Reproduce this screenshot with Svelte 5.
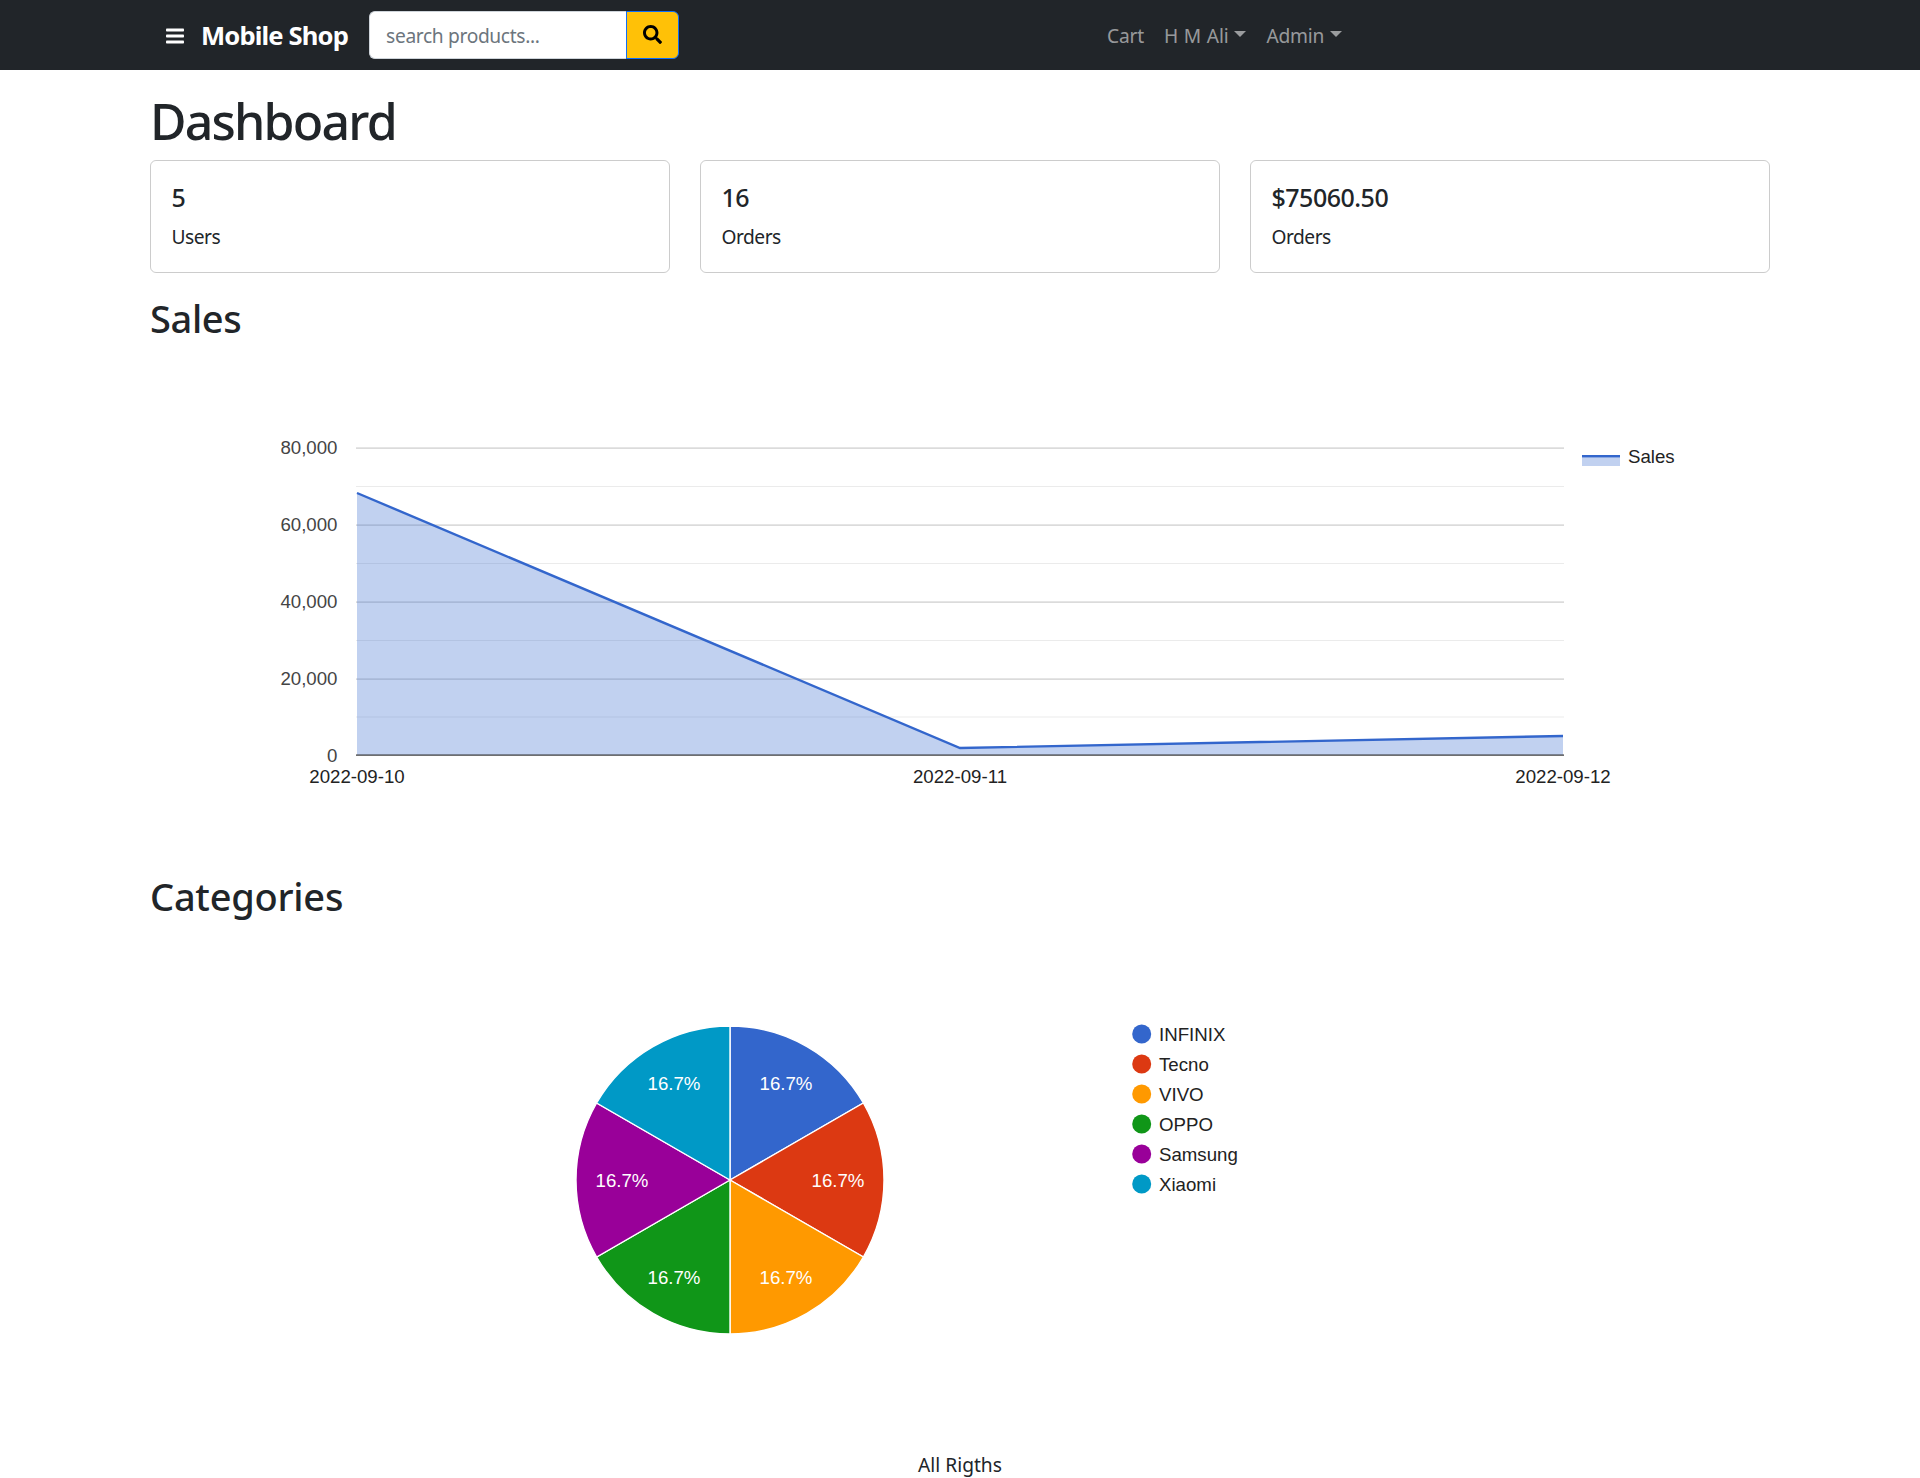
<script>
  const stats = [
    { value: '5', label: 'Users' },
    { value: '16', label: 'Orders' },
    { value: '$75060.50', label: 'Orders' }
  ];
  const majors = [
    { y: 448, label: '80,000' },
    { y: 525, label: '60,000' },
    { y: 602, label: '40,000' },
    { y: 679, label: '20,000' },
    { y: 756.5, label: '0' }
  ];
  const minors = [486.5, 563.5, 640.5, 717];
  const xLabels = [
    { x: 357, label: '2022-09-10' },
    { x: 960, label: '2022-09-11' },
    { x: 1563, label: '2022-09-12' }
  ];
  const cx = 730, cy = 1180, r = 154;
  const colors = ['#3366cc', '#dc3912', '#ff9900', '#109618', '#990099', '#0099c6'];
  const names = ['INFINIX', 'Tecno', 'VIVO', 'OPPO', 'Samsung', 'Xiaomi'];
  const labels = [[786, 1083], [838, 1180], [786, 1277], [674, 1277], [622, 1180], [674, 1083]];
  const slices = colors.map((color, i) => {
    const a0 = (i * Math.PI) / 3, a1 = ((i + 1) * Math.PI) / 3;
    const pt = (a) => `${(cx + r * Math.sin(a)).toFixed(2)} ${(cy - r * Math.cos(a)).toFixed(2)}`;
    return { color, d: `M${cx} ${cy}L${pt(a0)}A${r} ${r} 0 0 1 ${pt(a1)}Z` };
  });
</script>

<header class="navbar">
  <div class="brand">
    <svg class="bars" viewBox="0 0 18 16" aria-hidden="true">
      <rect x="0" y="0.5" width="18" height="3" rx="0.8" />
      <rect x="0" y="6.5" width="18" height="3" rx="0.8" />
      <rect x="0" y="12.5" width="18" height="3" rx="0.8" />
    </svg>
    <span class="brand-name">Mobile Shop</span>
  </div>
  <form class="search" onsubmit={(e) => e.preventDefault()}>
    <input type="text" placeholder="search products..." />
    <button type="submit" aria-label="Search">
      <svg viewBox="0 0 512 512" aria-hidden="true">
        <path d="M505 442.7L405.3 343c-4.5-4.5-10.6-7-17-7H372c27.6-35.3 44-79.7 44-128C416 93.1 322.9 0 208 0S0 93.1 0 208s93.1 208 208 208c48.3 0 92.7-16.4 128-44v16.3c0 6.4 2.5 12.5 7 17l99.7 99.7c9.4 9.4 24.6 9.4 33.9 0l28.3-28.3c9.4-9.4 9.4-24.6.1-34zM208 336c-70.7 0-128-57.2-128-128 0-70.7 57.2-128 128-128 70.7 0 128 57.2 128 128 0 70.7-57.2 128-128 128z" />
      </svg>
    </button>
  </form>
  <nav class="links">
    <a href="#cart">Cart</a>
    <a href="#user" class="drop">H M Ali</a>
    <a href="#admin" class="drop">Admin</a>
  </nav>
</header>

<main>
  <h1>Dashboard</h1>
  <div class="stats">
    {#each stats as s}
      <div class="card">
        <div class="value">{s.value}</div>
        <div class="label">{s.label}</div>
      </div>
    {/each}
  </div>

  <h2 class="sales-title">Sales</h2>
  <svg class="chart" viewBox="150 341 1620 500" role="img" aria-label="Sales chart">
    {#each minors as y}
      <rect x="356" y={y - 0.5} width="1208" height="1" fill="#ebebeb" />
    {/each}
    {#each majors.slice(0, 4) as m}
      <rect x="356" y={m.y - 0.5} width="1208" height="1.2" fill="#cccccc" />
    {/each}
    <path d="M357 493L960 748L1563 736V755H357Z" fill="#3366cc" fill-opacity="0.3" />
    <path d="M357 493L960 748L1563 736" fill="none" stroke="#3366cc" stroke-width="2.4" />
    <rect x="356" y="754.5" width="1208" height="1.2" fill="#333333" />
    {#each majors as m}
      <text x="337.5" y={m.y + 5.5} text-anchor="end" fill="#444444">{m.label}</text>
    {/each}
    {#each xLabels as l}
      <text x={l.x} y="783" text-anchor="middle" fill="#222222">{l.label}</text>
    {/each}
    <rect x="1582" y="455" width="38" height="11" fill="#3366cc" fill-opacity="0.3" />
    <rect x="1582" y="455" width="38" height="2.4" fill="#3366cc" />
    <text x="1628" y="463" fill="#222222">Sales</text>
  </svg>

  <h2 class="cat-title">Categories</h2>
  <svg class="chart" viewBox="150 921 1620 500" role="img" aria-label="Categories chart">
    {#each slices as s}
      <path d={s.d} fill={s.color} stroke="#ffffff" stroke-width="1.4" />
    {/each}
    {#each labels as l}
      <text x={l[0]} y={l[1] + 6.5} text-anchor="middle" fill="#ffffff">16.7%</text>
    {/each}
    {#each names as n, i}
      <circle cx="1141.7" cy={1034 + i * 30} r="9.5" fill={colors[i]} />
      <text x="1159" y={1034 + i * 30 + 6.5} fill="#222222">{n}</text>
    {/each}
  </svg>
</main>

<footer>All Rigths</footer>

<style>
  :global(body) {
    margin: 0;
    background: #fff;
    color: #212529;
    font-family: "Noto Sans", "Open Sans", sans-serif;
    font-size: 19.2px;
    line-height: 1.5;
  }
  .navbar {
    display: flex;
    align-items: center;
    height: 70px;
    background: #212529;
    padding-left: 166px;
    box-sizing: border-box;
  }
  .brand {
    display: flex;
    align-items: center;
    gap: 17px;
    color: #fff;
    margin-top: 2px;
  }
  .bars {
    width: 18px;
    height: 16px;
    fill: #fff;
  }
  .brand-name {
    font-size: 25.6px;
    font-weight: 700;
    letter-spacing: -0.85px;
  }
  .search {
    display: flex;
    height: 48px;
    margin-left: 21px;
    margin-top: -1px;
  }
  .search input {
    width: 257px;
    box-sizing: border-box;
    border: 1px solid #ced4da;
    border-radius: 6px 0 0 6px;
    border-right: 0;
    padding: 3px 16px 0;
    font: inherit;
    letter-spacing: -0.35px;
    outline: 0;
  }
  .search input::placeholder {
    color: #6c757d;
    opacity: 1;
  }
  .search button {
    width: 53px;
    box-sizing: border-box;
    padding: 0;
    display: flex;
    align-items: center;
    justify-content: center;
    background: #ffc107;
    border: 1px solid #0d6efd;
    border-radius: 0 6px 6px 0;
  }
  .search svg {
    width: 19px;
    height: 19px;
    fill: #000;
  }
  .links {
    display: flex;
    margin-left: 418px;
    margin-top: 2px;
  }
  .links a {
    padding: 0 10px;
    color: rgba(255, 255, 255, 0.55);
    text-decoration: none;
    letter-spacing: -0.2px;
    word-spacing: 1px;
    display: flex;
    align-items: center;
  }
  .drop::after {
    content: "";
    margin-left: 6px;
    margin-top: -3px;
    border-top: 6px solid currentColor;
    border-left: 6px solid transparent;
    border-right: 6px solid transparent;
  }
  main {
    width: 1620px;
    margin: 0 auto;
  }
  h1 {
    margin: 21px 0 0;
    font-size: 50px;
    font-weight: 500;
    line-height: 60px;
    letter-spacing: -1.8px;
  }
  .stats {
    display: grid;
    grid-template-columns: repeat(3, 1fr);
    gap: 30px;
    margin-top: 9px;
  }
  .card {
    height: 113px;
    box-sizing: border-box;
    border: 1px solid rgba(0, 0, 0, 0.2);
    border-radius: 6px;
    padding: 20.5px 20.5px 0;
  }
  .value {
    font-size: 25px;
    font-weight: 500;
    line-height: 30px;
    letter-spacing: -0.5px;
  }
  .label {
    margin-top: 12.5px;
    line-height: 25px;
    letter-spacing: -0.5px;
  }
  h2 {
    margin: 0;
    font-size: 38px;
    font-weight: 500;
    line-height: 46px;
    letter-spacing: -0.35px;
  }
  .sales-title {
    margin-top: 22px;
  }
  .chart {
    display: block;
    width: 1620px;
    height: 500px;
    font-family: "Liberation Sans", Arial, sans-serif;
    font-size: 18.67px;
  }
  .cat-title {
    margin: 32px 0 2px;
    letter-spacing: -0.25px;
  }
  footer {
    margin-top: 30px;
    line-height: 27px;
    text-align: center;
  }
</style>
